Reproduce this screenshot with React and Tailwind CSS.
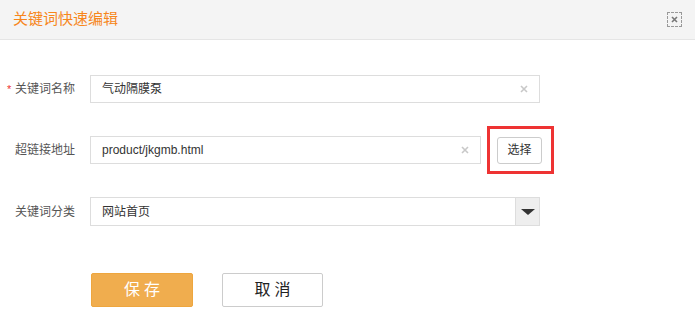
import React from "react";

const CJK = { fontFamily: '"Liberation Sans", "Noto Sans CJK SC", sans-serif' };

function Clear() {
  return (
    <svg width="8" height="8" viewBox="0 0 8 8" className="shrink-0">
      <path d="M1 1 L7 7 M7 1 L1 7" stroke="#c8c8c8" strokeWidth="1.6" />
    </svg>
  );
}

function Label({ children, required }) {
  return (
    <div className="w-[90px] shrink-0 flex items-center pl-[7px] text-[12px] text-[#555]">
      <span className="w-[8px] text-[#e33] text-[11px] leading-none">{required ? "*" : ""}</span>
      <span>{children}</span>
    </div>
  );
}

export default function App() {
  return (
    <div className="w-[695px] h-[322px] bg-white overflow-hidden" style={CJK}>
      <div className="h-[40px] bg-[#f4f4f4] border-b border-[#e5e5e5] flex items-center justify-between pl-[13px] pr-[13px]">
        <span className="text-[15px] text-[#f7861b] tracking-[0px]">关键词快速编辑</span>
        <span className="w-[15px] h-[15px] border border-dashed border-[#999] flex items-center justify-center">
          <svg width="7" height="7" viewBox="0 0 7 7">
            <path d="M1 1 L6 6 M6 1 L1 6" stroke="#777" strokeWidth="1.6" />
          </svg>
        </span>
      </div>

      <div className="pt-[35px] flex flex-col">
        <div className="flex items-center h-[28px]">
          <Label required>关键词名称</Label>
          <div className="w-[450px] h-[28px] border border-[#ddd] flex items-center pl-[11px] pr-[11px] justify-between">
            <span className="text-[12px] text-[#333]">气动隔膜泵</span>
            <Clear />
          </div>
        </div>

        <div className="flex items-center h-[28px] mt-[33px]">
          <Label>超链接地址</Label>
          <div className="w-[391px] h-[28px] border border-[#ddd] flex items-center pl-[11px] pr-[11px] justify-between">
            <span className="text-[12px] text-[#333]">product/jkgmb.html</span>
            <Clear />
          </div>
          <div className="relative ml-[16px]">
            <button className="w-[45px] h-[27px] border border-[#ccc] rounded-[3px] bg-white text-[12px] text-[#333] flex items-center justify-center">
              选择
            </button>
            <span className="absolute left-[-10px] top-[-11px] w-[67px] h-[48px] border-[3px] border-[#ee3333] pointer-events-none" />
          </div>
        </div>

        <div className="flex items-center h-[29px] mt-[33px]">
          <Label>关键词分类</Label>
          <div className="w-[450px] h-[29px] border border-[#ddd] flex items-center">
            <span className="flex-1 pl-[11px] text-[12px] text-[#333]">网站首页</span>
            <div className="w-[24px] h-full bg-[#eee] border-l border-[#ddd] flex items-center justify-center">
              <svg width="14" height="6" viewBox="0 0 14 6">
                <path d="M0 0 L14 0 L7 6 Z" fill="#333" />
              </svg>
            </div>
          </div>
        </div>

        <div className="flex items-center mt-[47px] pl-[91px] gap-[29px]">
          <button className="w-[102px] h-[34px] bg-[#f0ad4e] border border-[#eea63e] rounded-[2px] text-white text-[16px] tracking-[4px] flex items-center justify-center">
            <span className="pl-[4px]">保存</span>
          </button>
          <button className="w-[101px] h-[34px] bg-white border border-[#ccc] rounded-[2px] text-[#222] text-[16px] tracking-[4px] flex items-center justify-center">
            <span className="pl-[4px]">取消</span>
          </button>
        </div>
      </div>
    </div>
  );
}
